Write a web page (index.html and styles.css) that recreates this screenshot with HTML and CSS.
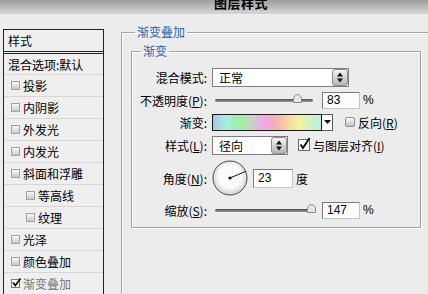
FILE: index.html
```html
<!DOCTYPE html>
<html lang="zh-CN">
<head>
<meta charset="utf-8">
<title>图层样式</title>
<link rel="stylesheet" href="styles.css">
</head>
<body>
<div class="window">
  <div class="titlebar"><span class="title">图层样式</span></div>
  <div class="main">
    <div class="side">
      <div class="side-head">样式</div>
      <div class="side-row">混合选项:默认</div>
      <div class="side-row item"><span class="cb"></span>投影</div>
      <div class="side-row item"><span class="cb"></span>内阴影</div>
      <div class="side-row item"><span class="cb"></span>外发光</div>
      <div class="side-row item"><span class="cb"></span>内发光</div>
      <div class="side-row item"><span class="cb"></span>斜面和浮雕</div>
      <div class="side-row item sub"><span class="cb"></span>等高线</div>
      <div class="side-row item sub"><span class="cb"></span>纹理</div>
      <div class="side-row item"><span class="cb"></span>光泽</div>
      <div class="side-row item"><span class="cb"></span>颜色叠加</div>
      <div class="side-row item active"><span class="cb on"><svg width="11" height="11" viewBox="0 0 11 11"><path d="M2 5.5 L4.3 8.5 L9.5 1.5" fill="none" stroke="#111" stroke-width="1.8"/></svg></span>渐变叠加</div>
    </div>
    <div class="content">
      <fieldset class="group outer">
        <legend>渐变叠加</legend>
        <fieldset class="group inner">
          <legend>渐变</legend>
          <div class="row r1">
            <span class="lbl">混合模式:</span>
            <div class="select wide"><span>正常</span><span class="spin"><svg width="8" height="11" viewBox="0 0 8 11"><path d="M4 0.5 L7 4.5 H1 Z M4 10.5 L7 6.5 H1 Z" fill="#111"/></svg></span></div>
          </div>
          <div class="row r2">
            <span class="lbl">不透明度(<u>P</u>):</span>
            <div class="slider"><span class="thumb" style="left:78px"><svg width="9" height="9" viewBox="0 0 9 9"><path d="M4.5 0.5 C7 0.5 8.5 3 8.5 5 V8.5 H0.5 V5 C0.5 3 2 0.5 4.5 0.5 Z" fill="#e6e6e6" stroke="#8a8a8a"/></svg></span></div>
            <div class="num">83</div>
            <span class="unit">%</span>
          </div>
          <div class="row r3">
            <span class="lbl">渐变:</span>
            <div class="grad"></div>
            <div class="drop"><svg width="7" height="4" viewBox="0 0 7 4"><path d="M0 0 H7 L3.5 4 Z" fill="#111"/></svg></div>
            <span class="cb2"></span>
            <span class="opt">反向(<u>R</u>)</span>
          </div>
          <div class="row r4">
            <span class="lbl">样式(<u>L</u>):</span>
            <div class="select narrow"><span>径向</span><span class="spin"><svg width="8" height="11" viewBox="0 0 8 11"><path d="M4 0.5 L7 4.5 H1 Z M4 10.5 L7 6.5 H1 Z" fill="#111"/></svg></span></div>
            <span class="cb3"><svg width="13" height="14" viewBox="0 0 13 14"><rect x="0.5" y="2.5" width="11" height="11" fill="#fff" stroke="#6a6a6a"/><path d="M2.5 7.5 L5 11 L11.5 1" fill="none" stroke="#111" stroke-width="2"/></svg></span>
            <span class="opt">与图层对齐(<u>I</u>)</span>
          </div>
          <div class="row r5">
            <span class="lbl">角度(<u>N</u>):</span>
            <svg class="dial" width="36" height="36" viewBox="0 0 36 36">
              <defs><radialGradient id="dg" cx="50%" cy="45%" r="55%"><stop offset="0.6" stop-color="#fbfbfb"/><stop offset="1" stop-color="#cfcfcf"/></radialGradient></defs>
              <circle cx="18" cy="18" r="17" fill="url(#dg)" stroke="#4a4a4a"/>
              <line x1="18" y1="18" x2="33.6" y2="11.4" stroke="#111" stroke-width="1"/>
              <circle cx="18" cy="18" r="1.6" fill="#111"/>
            </svg>
            <div class="num ang">23</div>
            <span class="unit">度</span>
          </div>
          <div class="row r6">
            <span class="lbl">缩放(<u>S</u>):</span>
            <div class="slider"><span class="thumb" style="left:92px"><svg width="9" height="9" viewBox="0 0 9 9"><path d="M4.5 0.5 C7 0.5 8.5 3 8.5 5 V8.5 H0.5 V5 C0.5 3 2 0.5 4.5 0.5 Z" fill="#e6e6e6" stroke="#8a8a8a"/></svg></span></div>
            <div class="num">147</div>
            <span class="unit">%</span>
          </div>
        </fieldset>
      </fieldset>
    </div>
  </div>
</div>
</body>
</html>
```

FILE: styles.css
```css
html, body {
  margin: 0;
  padding: 0;
  width: 428px;
  height: 294px;
  overflow: hidden;
  background: #ececec;
}

body {
  font-family: "Noto Sans CJK SC", "Liberation Sans", sans-serif;
  font-size: 12px;
  color: #000;
}

.window {
  width: 428px;
  height: 294px;
  overflow: hidden;
}

.titlebar {
  height: 14px;
  overflow: hidden;
  background: linear-gradient(#9e9e9e, #d6d6d6);
  padding-left: 214px;
  box-sizing: border-box;
}

.title {
  display: block;
  font-weight: bold;
  font-size: 13px;
  line-height: 13px;
  margin-top: -4px;
  letter-spacing: 0.5px;
}

.main {
  display: flex;
  align-items: flex-start;
}

.side {
  margin-left: 3px;
  margin-top: 15px;
  width: 101px;
  box-sizing: border-box;
  border: 1px solid #222;
  border-bottom: none;
  background: #efefef;
}

.side-head {
  height: 21px;
  line-height: 21px;
  padding-left: 4px;
  border-bottom: 3px double #222;
}

.side-row {
  height: 21px;
  padding-left: 4px;
  display: flex;
  align-items: center;
  border-bottom: 1px solid #d7d7d7;
  white-space: nowrap;
}

.side-row:nth-child(2) {
  height: 20px;
}

.side-row.item {
  padding-left: 7px;
}

.side-row.sub {
  padding-left: 22px;
}

.side-row.active {
  color: #777;
}

.cb {
  width: 9px;
  height: 9px;
  box-sizing: border-box;
  border: 1px solid #a2a2a2;
  background: linear-gradient(#fafafa, #c9c9c9);
  margin-right: 3px;
  flex: none;
  position: relative;
}

.cb.on {
  background: #fff;
  border-color: #777;
}

.cb.on svg {
  position: absolute;
  left: -1px;
  top: -3px;
}

.content {
  margin-left: 17px;
  margin-top: 11px;
  flex: 1;
  margin-right: -20px;
}

.group {
  margin: 0;
  border: 1px solid #a4a4a4;
  box-shadow: 1px 1px 0 #fff, inset 1px 1px 0 #fff;
  min-width: 0;
}

.group legend {
  font-size: 12px;
  line-height: 14px;
  color: #2c62a8;
  padding: 0 2px;
}

.outer {
  padding: 5px 0 0 9px;
  height: 300px;
  box-sizing: border-box;
}

.outer > legend {
  margin-left: 4px;
}

.inner {
  width: 290px;
  box-sizing: border-box;
  padding: 8px 0 6px 0;
}

.inner > legend {
  margin-left: 9px;
}

.row {
  display: flex;
  align-items: center;
  white-space: nowrap;
}

.r1 { height: 23px; }
.r2 { height: 22px; }
.r3 { height: 22px; }
.r4 { height: 24px; }
.r5 { height: 42px; }
.r6 { height: 22px; }

.lbl {
  width: 75px;
  text-align: right;
  margin-right: 5px;
  flex: none;
}

u {
  text-decoration: underline;
  text-underline-offset: 1px;
}

.select {
  height: 19px;
  box-sizing: border-box;
  border: 1px solid #7e7e7e;
  background: #fff;
  display: flex;
  align-items: center;
  justify-content: space-between;
  padding-left: 6px;
  flex: none;
}

.select.wide { width: 137px; }
.select.narrow { width: 76px; }

.spin {
  width: 16px;
  height: 17px;
  box-sizing: border-box;
  border: 1px solid #8c8c8c;
  border-radius: 3px;
  background: linear-gradient(#f4f4f4, #b6b6b6);
  display: flex;
  align-items: center;
  justify-content: center;
}

.slider {
  position: relative;
  width: 98px;
  height: 3px;
  margin-left: 3px;
  border-radius: 2px;
  background: linear-gradient(#4c4c4c, #9a9a9a);
  flex: none;
}

.thumb {
  position: absolute;
  top: -5px;
  width: 9px;
  height: 9px;
  display: block;
}

.thumb svg {
  display: block;
}

.num {
  width: 38px;
  height: 17px;
  box-sizing: border-box;
  border: 1px solid;
  border-color: #7a7a7a #c4c4c4 #c4c4c4 #7a7a7a;
  background: #fff;
  font-family: "Liberation Sans", Arial, sans-serif;
  font-size: 12px;
  line-height: 15px;
  padding-left: 4px;
  margin-left: 9px;
  flex: none;
}

.num.ang {
  width: 40px;
  height: 19px;
  line-height: 17px;
  margin-left: 5px;
}

.unit {
  margin-left: 3px;
  font-family: "Liberation Sans", "Noto Sans CJK SC", sans-serif;
}

.grad {
  width: 110px;
  height: 17px;
  box-sizing: border-box;
  border: 1px solid #1c1c1c;
  background: linear-gradient(to right, #aac6ec 0%, #a6eee0 12%, #9ff19f 25%, #c9d2c4 36%, #f0a6ec 46%, #f7afb3 58%, #f5d2a4 68%, #f2f29e 80%, #b2f2e4 100%);
  flex: none;
}

.drop {
  width: 11px;
  height: 17px;
  box-sizing: border-box;
  border: 1px solid #5a5a5a;
  border-left: none;
  background: #fff;
  display: flex;
  align-items: center;
  justify-content: center;
  flex: none;
}

.cb2 {
  width: 10px;
  height: 10px;
  box-sizing: border-box;
  border: 1px solid #8e8e8e;
  border-radius: 2px;
  background: linear-gradient(#fbfbfb, #c2c2c2);
  margin-left: 12px;
  margin-right: 3px;
  flex: none;
}

.cb3 {
  width: 13px;
  height: 14px;
  margin-left: 10px;
  margin-right: 2px;
  margin-top: -3px;
  flex: none;
}

.cb3 svg {
  display: block;
}

.dial {
  display: block;
  flex: none;
}
```
